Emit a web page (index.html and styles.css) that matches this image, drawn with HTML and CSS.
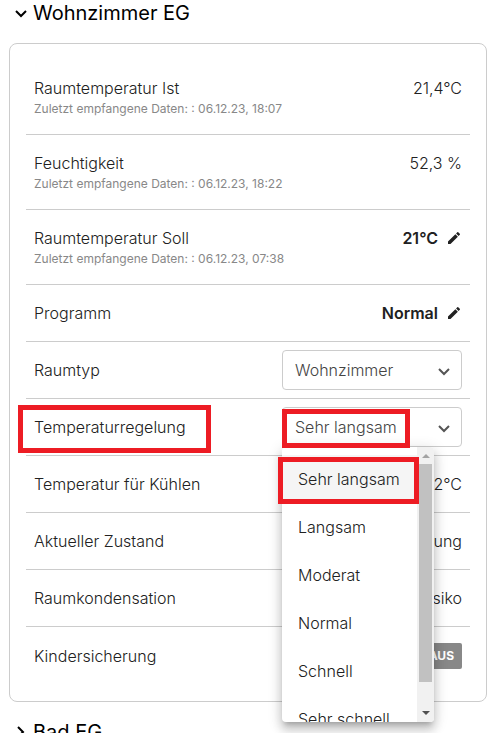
FILE: index.html
```html
<!DOCTYPE html>
<html lang="de">
<head>
<meta charset="utf-8">
<meta name="viewport" content="width=device-width, initial-scale=1">
<title>Wohnzimmer EG</title>
<link rel="stylesheet" href="styles.css">
</head>
<body>

<h2 class="room">
  <button type="button" class="room-toggle" aria-expanded="true">
    <svg class="room-icon" viewBox="0 0 16 16"><path d="M3 6l5 5 5-5"/></svg>
    Wohnzimmer EG
  </button>
</h2>

<div class="card">
  <div class="row tall">
    <div>
      <div>Raumtemperatur Ist</div>
      <div class="updated">Zuletzt empfangene Daten: : 06.12.23, 18:07</div>
    </div>
    <div class="value">21,4°C</div>
  </div>
  <div class="row tall">
    <div>
      <div>Feuchtigkeit</div>
      <div class="updated">Zuletzt empfangene Daten: : 06.12.23, 18:22</div>
    </div>
    <div class="value">52,3 %</div>
  </div>
  <div class="row tall">
    <div>
      <div>Raumtemperatur Soll</div>
      <div class="updated">Zuletzt empfangene Daten: : 06.12.23, 07:38</div>
    </div>
    <button type="button" class="edit">
      21°C
      <svg class="pencil" viewBox="0 0 24 24"><path d="M3 17.25V21h3.75L17.8 9.94l-3.75-3.75L3 17.25zM20.7 7.04a1 1 0 0 0 0-1.41l-2.34-2.34a1 1 0 0 0-1.41 0l-1.83 1.83 3.75 3.75 1.83-1.83z"/></svg>
    </button>
  </div>
  <div class="row">
    <div>Programm</div>
    <button type="button" class="edit">
      Normal
      <svg class="pencil" viewBox="0 0 24 24"><path d="M3 17.25V21h3.75L17.8 9.94l-3.75-3.75L3 17.25zM20.7 7.04a1 1 0 0 0 0-1.41l-2.34-2.34a1 1 0 0 0-1.41 0l-1.83 1.83 3.75 3.75 1.83-1.83z"/></svg>
    </button>
  </div>
  <div class="row">
    <label for="roomtype">Raumtyp</label>
    <div class="select">
      <select id="roomtype" name="roomtype">
        <option>Wohnzimmer</option>
      </select>
      <svg class="arrow" viewBox="0 0 12 8"><path d="M1 1l5 5 5-5"/></svg>
    </div>
  </div>
  <div class="row">
    <label for="control" class="marked mark-label">Temperaturregelung</label>
    <div class="select marked mark-select">
      <select id="control" name="control">
        <option>Sehr langsam</option>
        <option>Langsam</option>
        <option>Moderat</option>
        <option>Normal</option>
        <option>Schnell</option>
        <option>Sehr schnell</option>
      </select>
      <svg class="arrow" viewBox="0 0 12 8"><path d="M1 1l5 5 5-5"/></svg>
      <div class="menu">
        <div class="options" role="listbox" aria-label="Temperaturregelung">
          <button type="button" role="option" class="option selected" aria-selected="true">Sehr langsam</button>
          <button type="button" role="option" class="option">Langsam</button>
          <button type="button" role="option" class="option">Moderat</button>
          <button type="button" role="option" class="option">Normal</button>
          <button type="button" role="option" class="option">Schnell</button>
          <button type="button" role="option" class="option">Sehr schnell</button>
        </div>
        <div class="scrollbar">
          <svg class="scroll-arrow up" viewBox="0 0 8 4"><path d="M0 4l4-4 4 4z"/></svg>
          <div class="thumb"></div>
          <svg class="scroll-arrow" viewBox="0 0 8 4"><path d="M0 0l4 4 4-4z"/></svg>
        </div>
      </div>
      <span class="mark-option"></span>
    </div>
  </div>
  <div class="row">
    <div>Temperatur für Kühlen</div>
    <div>22°C</div>
  </div>
  <div class="row">
    <div>Aktueller Zustand</div>
    <div>Heizung</div>
  </div>
  <div class="row">
    <div>Raumkondensation</div>
    <div>Kein Risiko</div>
  </div>
  <div class="row">
    <div>Kindersicherung</div>
    <button type="button" class="switch">AUS</button>
  </div>
</div>

<h2 class="room">
  <button type="button" class="room-toggle" aria-expanded="false">
    <svg class="room-icon" viewBox="0 0 16 16"><path d="M5 3l5 5-5 5"/></svg>
    Bad EG
  </button>
</h2>

</body>
</html>
```

FILE: styles.css
```css
html {
  height: 100%;
  overflow: hidden;
}
body {
  height: 100%;
  margin: 0;
  padding: 0 5px 0 9px;
  box-sizing: border-box;
  overflow: hidden;
  background: white;
  color: #212121;
  font-family: Inter, "Liberation Sans", sans-serif;
  font-size: 16px;
  font-weight: 300;
  line-height: 24px;
}
button, select {
  font: inherit;
  color: inherit;
  background: none;
  border: none;
  margin: 0;
  padding: 0;
  cursor: pointer;
}
.room {
  margin: 0;
  font-size: 20px;
  font-weight: 400;
  line-height: 26px;
  color: black;
}
.room-toggle {
  display: flex;
  align-items: center;
  gap: 4px;
  padding-left: 4px;
}
.room-icon {
  width: 16px;
  height: 16px;
  fill: none;
  stroke: black;
  stroke-width: 2;
}
.card {
  margin: 17px 0;
  padding: 16px;
  border: 1px solid #cccccc;
  border-radius: 8px;
}
.row {
  display: flex;
  justify-content: space-between;
  align-items: center;
  min-height: 56px;
  padding: 0 8px;
  border-bottom: 1px solid #cccccc;
}
.row:last-child {
  min-height: 58px;
  border-bottom: none;
}
.tall {
  align-items: flex-start;
  min-height: 58px;
  padding-top: 16px;
}
.updated {
  font-size: 12px;
  font-weight: 400;
  line-height: 18px;
  color: #888888;
}
.edit {
  display: flex;
  align-items: center;
  gap: 8px;
  font-weight: 600;
}
.pencil {
  width: 16px;
  height: 16px;
  fill: #212121;
}
.select {
  position: relative;
  width: 180px;
}
.select select {
  display: block;
  width: 100%;
  height: 40px;
  padding: 0 32px 0 12px;
  border: 1px solid #cccccc;
  border-radius: 4px;
  appearance: none;
  color: #444444;
}
.arrow {
  position: absolute;
  right: 12px;
  top: 18px;
  width: 12px;
  height: 8px;
  fill: none;
  stroke: #555555;
  stroke-width: 2;
  pointer-events: none;
}
/* the shadow also falls on the lower part of the select */
.menu {
  position: absolute;
  z-index: 1;
  left: 0;
  top: 40px;
  display: flex;
  width: 152px;
  height: 275px;
  overflow: hidden;
  background: white;
  border-radius: 4px;
  box-shadow: 0 5px 5px -3px rgba(0, 0, 0, .2), 0 8px 10px 1px rgba(0, 0, 0, .14), 0 3px 14px 2px rgba(0, 0, 0, .12);
}
.options {
  flex: 1;
  padding-top: 8px;
}
.option {
  display: block;
  width: 100%;
  height: 48px;
  padding: 0 16px;
  text-align: left;
  white-space: nowrap;
}
.selected {
  background: #f5f5f5;
}
.scrollbar {
  display: flex;
  flex-direction: column;
  align-items: center;
  width: 17px;
  padding: 7px 0;
  box-sizing: border-box;
  background: #f1f1f1;
}
.scroll-arrow {
  width: 8px;
  height: 4px;
  fill: #505050;
}
.up {
  fill: #a3a3a3;
}
.thumb {
  width: 13px;
  height: 218px;
  margin: 6px 0 auto;
  background: #c1c1c1;
}

/* red highlight frames */
.marked {
  position: relative;
}
.marked::before, .mark-option {
  content: "";
  position: absolute;
  z-index: 2;
  box-sizing: border-box;
  border: 5px solid #ed1c24;
  pointer-events: none;
}
.mark-label::before {
  left: -16px;
  right: -25px;
  top: -10px;
  bottom: -14px;
}
.mark-select::before {
  left: 0;
  top: 2px;
  width: 128px;
  height: 39px;
}
.mark-option {
  left: -4px;
  top: 50px;
  width: 141px;
  height: 47px;
}
.switch {
  height: 26px;
  padding: 0 8px;
  border-radius: 2px;
  background: #888888;
  color: white;
  font-size: 12px;
  font-weight: 700;
}
```
